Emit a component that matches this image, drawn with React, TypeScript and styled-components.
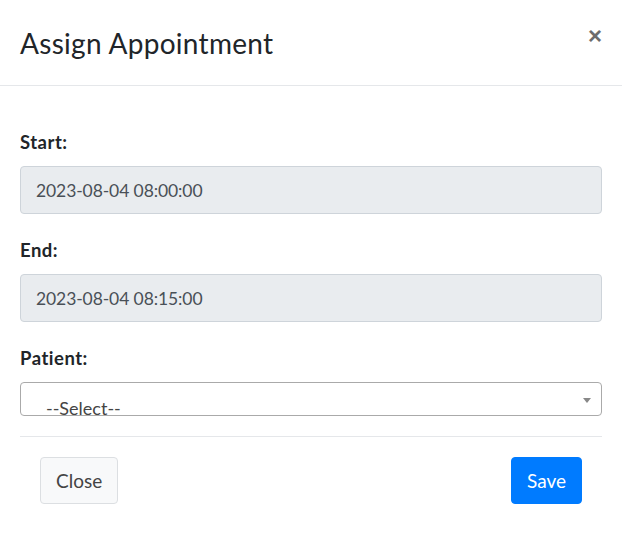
import React from "react";
import styled, { createGlobalStyle } from "styled-components";

const GlobalStyle = createGlobalStyle`
  html, body { margin: 0; padding: 0; background: #ffffff; }
  body { font-family: "Lato", "Liberation Sans", sans-serif; color: #212529; }
  * { box-sizing: border-box; }
`;

const Modal = styled.div`
  width: 622px;
  height: 543px;
  background: #ffffff;
  display: flex;
  flex-direction: column;
`;

const Header = styled.div`
  height: 86px;
  border-bottom: 1px solid #e5e7ea;
  padding: 0 20px;
  display: flex;
  align-items: flex-start;
  justify-content: space-between;
`;

const Title = styled.h5`
  margin: 27px 0 0;
  font-size: 28px;
  font-weight: 400;
  letter-spacing: 0.3px;
  line-height: 32px;
  color: #212529;
`;

const CloseX = styled.button`
  margin: 24px 0 0;
  padding: 0;
  border: none;
  background: transparent;
  font-family: "Liberation Sans", sans-serif;
  font-size: 24px;
  font-weight: 700;
  line-height: 24px;
  color: #6c6c6c;
  cursor: pointer;
`;

const Body = styled.div`
  padding: 44px 20px 0;
  display: flex;
  flex-direction: column;
`;

const Label = styled.label`
  font-size: 18.5px;
  font-weight: 700;
  letter-spacing: 0.5px;
  line-height: 24px;
  margin-bottom: 12px;
  color: #212529;
`;

const Input = styled.div`
  height: 48px;
  border: 1px solid #ced4da;
  border-radius: 4px;
  background: #e9ecef;
  padding: 0 15px;
  display: flex;
  align-items: center;
  font-size: 17.5px;
  letter-spacing: -0.1px;
  color: #495057;
  margin-bottom: 24px;
`;

const Select = styled.div`
  position: relative;
  height: 34px;
  border: 1px solid #aaaaaa;
  border-radius: 4px;
  overflow: hidden;
  margin-bottom: 20px;
`;

const SelectText = styled.span`
  display: block;
  padding: 13px 0 0 25px;
  font-size: 18px;
  line-height: 24px;
  color: #444444;
`;

const Arrow = styled.span`
  position: absolute;
  right: 10px;
  top: 15px;
  width: 0;
  height: 0;
  border-left: 4.5px solid transparent;
  border-right: 4.5px solid transparent;
  border-top: 5px solid #888888;
`;

const Footer = styled.div`
  margin: 0 20px;
  border-top: 1px solid #e5e7ea;
  padding: 20px 20px;
  display: flex;
  justify-content: space-between;
`;

const Button = styled.button<{ $primary?: boolean }>`
  height: 47px;
  padding: 0 15px;
  border-radius: 4px;
  font-family: inherit;
  font-size: 19px;
  line-height: 1;
  cursor: pointer;
  border: 1px solid ${(p) => (p.$primary ? "#007bff" : "#dcdfe2")};
  background: ${(p) => (p.$primary ? "#007bff" : "#f8f9fa")};
  color: ${(p) => (p.$primary ? "#ffffff" : "#444444")};
`;

export default function App() {
  return (
    <>
      <GlobalStyle />
      <Modal>
        <Header>
          <Title>Assign Appointment</Title>
          <CloseX aria-label="Close">×</CloseX>
        </Header>
        <Body>
          <Label>Start:</Label>
          <Input>2023-08-04 08:00:00</Input>
          <Label>End:</Label>
          <Input>2023-08-04 08:15:00</Input>
          <Label>Patient:</Label>
          <Select>
            <SelectText>--Select--</SelectText>
            <Arrow />
          </Select>
        </Body>
        <Footer>
          <Button>Close</Button>
          <Button $primary>Save</Button>
        </Footer>
      </Modal>
    </>
  );
}
